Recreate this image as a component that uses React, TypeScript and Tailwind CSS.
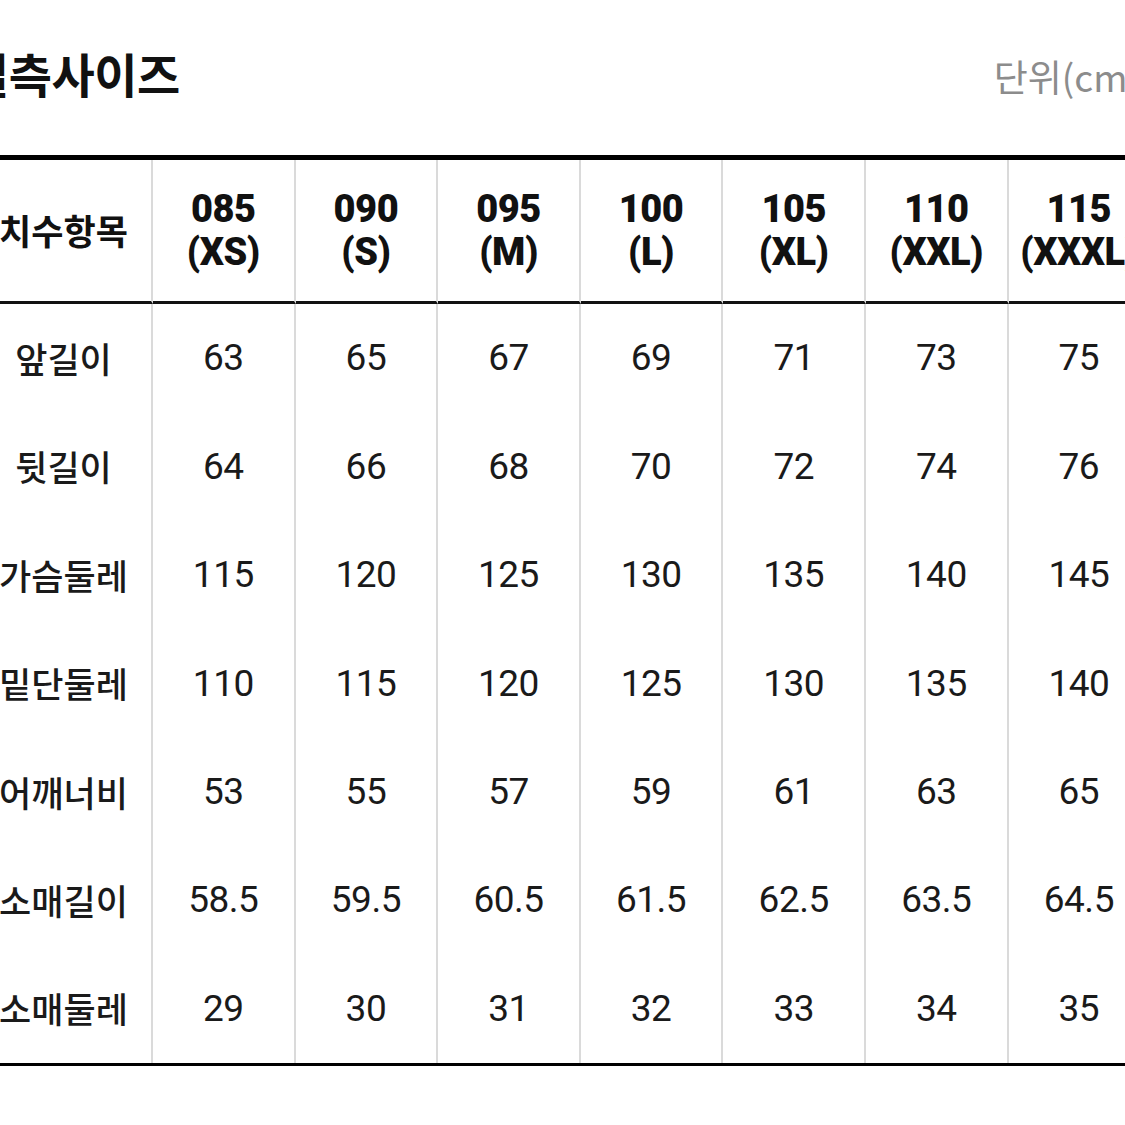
import React from "react";

const sizes: [string, string][] = [
  ["085", "(XS)"],
  ["090", "(S)"],
  ["095", "(M)"],
  ["100", "(L)"],
  ["105", "(XL)"],
  ["110", "(XXL)"],
  ["115", "(XXXL)"],
];

const rows: [string, (string | number)[]][] = [
  ["앞길이", [63, 65, 67, 69, 71, 73, 75]],
  ["뒷길이", [64, 66, 68, 70, 72, 74, 76]],
  ["가슴둘레", [115, 120, 125, 130, 135, 140, 145]],
  ["밑단둘레", [110, 115, 120, 125, 130, 135, 140]],
  ["어깨너비", [53, 55, 57, 59, 61, 63, 65]],
  ["소매길이", ["58.5", "59.5", "60.5", "61.5", "62.5", "63.5", "64.5"]],
  ["소매둘레", [29, 30, 31, 32, 33, 34, 35]],
];

export default function App() {
  return (
    <div className="w-[1125px] h-[1125px] overflow-hidden bg-white">
      <div className="ml-[-24px] w-[1200px]">
        <div className="flex items-start justify-between h-[155px]">
          <div className="ml-[-10px] mt-[49px] text-[47px] leading-[47px] font-bold text-[#111] tracking-[-0.5px] font-['Noto_Sans_CJK_KR','Noto_Sans',sans-serif]">
            실측사이즈
          </div>
          <div className="mt-[58px] mr-[36px] text-[37px] leading-[37px] text-[#8c8c8c] font-['Noto_Sans_CJK_KR','Noto_Sans',sans-serif]">
            단위(cm)
          </div>
        </div>
        <div className="border-t-[5px] border-b-[3px] border-black grid grid-cols-[177px_repeat(7,142.6px)]">
          <div className="h-[144px] border-r-2 border-r-[#dadada] border-b-[3px] border-b-[#111] flex items-center justify-center text-[35px] font-bold text-[#111] font-['Noto_Sans_CJK_KR','Noto_Sans',sans-serif]">
            치수항목
          </div>
          {sizes.map(([a, b]) => (
            <div
              key={a}
              className="h-[144px] border-r-2 border-r-[#dadada] border-b-[3px] border-b-[#111] flex flex-col items-center justify-center text-[38px] leading-[43px] font-black text-[#111] tracking-[-0.5px] font-['Roboto','Liberation_Sans',sans-serif]"
            >
              <span>{a}</span>
              <span className="whitespace-nowrap">{b}</span>
            </div>
          ))}
          {rows.map(([label, vals]) => (
            <React.Fragment key={label}>
              <div className="h-[108.4px] border-r-2 border-r-[#dadada] flex items-center justify-center text-[35px] font-medium text-[#1a1a1a] font-['Noto_Sans_CJK_KR','Noto_Sans',sans-serif]">
                {label}
              </div>
              {vals.map((v, i) => (
                <div
                  key={i}
                  className="h-[108.4px] border-r-2 border-r-[#dadada] flex items-center justify-center text-[37px] text-[#1a1a1a] tracking-[-0.5px] font-['Roboto','Liberation_Sans',sans-serif]"
                >
                  {v}
                </div>
              ))}
            </React.Fragment>
          ))}
        </div>
      </div>
    </div>
  );
}
